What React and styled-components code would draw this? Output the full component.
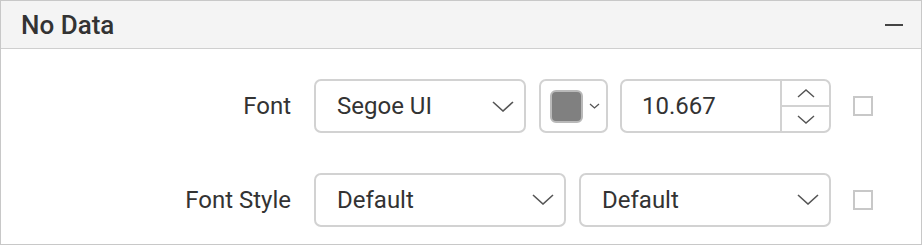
import React from 'react';
import styled, { createGlobalStyle } from 'styled-components';

const GlobalStyle = createGlobalStyle`
	html, body {
		margin: 0;
		padding: 0;
		background: #fff;
	}
	body {
		font-family: Roboto, "Liberation Sans", sans-serif;
		overflow: hidden;
	}
`

const Panel = styled.div`
	width: 922px;
	height: 245px;
	box-sizing: border-box;
	border: 1px solid #c8c8c8;
	overflow: hidden;
	background: #fff;
`

const Header = styled.div`
	height: 47px;
	border-bottom: 1px solid #cfcfcf;
	background: #f4f4f4;
	display: flex;
	align-items: center;
	justify-content: space-between;
	padding: 0 18px 0 20px;
	.title {
		font-size: 26px;
		font-weight: 500;
		color: #333;
	}
	.collapse {
		width: 18px;
		height: 2px;
		background: #444;
	}
`

const Body = styled.div`
	padding-top: 30px;
	display: flex;
	flex-direction: column;
	gap: 39px;
`

const Row = styled.div`
	display: flex;
	align-items: center;
	height: ${p => p.h || 54}px;
`

const Label = styled.div`
	width: 290px;
	text-align: right;
	font-size: 24px;
	color: #333;
	margin-right: 23px;
`

const Controls = styled.div`
	width: 517px;
	display: flex;
	justify-content: space-between;
	align-items: center;
`

const Box = styled.div`
	box-sizing: border-box;
	width: ${p => p.w}px;
	height: 54px;
	border: 2px solid #d2d2d2;
	border-radius: 7px;
	background: #fff;
	display: flex;
	align-items: center;
`

const Select = styled(Box)`
	padding: 0 10px 0 21px;
	justify-content: space-between;
	font-size: 24px;
	color: #333;
`

const ColorPick = styled(Box)`
	padding-left: 9px;
	gap: 6px;
	.swatch {
		width: 33px;
		height: 33px;
		box-sizing: border-box;
		border: 2px solid #b9b9b9;
		border-radius: 6px;
		background: #808080;
	}
`

const NumberBox = styled(Box)`
	overflow: hidden;
	.value {
		flex: 1;
		padding-left: 20px;
		font-size: 24px;
		color: #333;
	}
	.spin {
		width: 47px;
		height: 100%;
		border-left: 2px solid #d2d2d2;
		display: flex;
		flex-direction: column;
	}
	.spin > div {
		flex: 1;
		display: flex;
		align-items: center;
		justify-content: center;
	}
	.spin > div + div {
		border-top: 2px solid #d2d2d2;
	}
`

const Check = styled.div`
	width: 20px;
	height: 20px;
	box-sizing: border-box;
	border: 2px solid #c8c8c8;
	margin-left: 22px;
`

const Chevron = ({ w = 22, h = 11, up, sw = 1.6 }) => (
	<svg width={w} height={h} viewBox={`0 0 ${w} ${h}`}>
		<polyline
			points={up ? `1,${h - 1} ${w / 2},1 ${w - 1},${h - 1}` : `1,1 ${w / 2},${h - 1} ${w - 1},1`}
			fill="none"
			stroke="#555"
			strokeWidth={sw}
		/>
	</svg>
)

const App = () => {
	return (
		<Panel>
			<GlobalStyle />
			<Header>
				<span className="title">No Data</span>
				<span className="collapse" />
			</Header>
			<Body>
				<Row>
					<Label>Font</Label>
					<Controls>
						<Select w={212}>
							<span>Segoe UI</span>
							<Chevron />
						</Select>
						<ColorPick w={69}>
							<div className="swatch" />
							<Chevron w={11} h={6} sw={1.3} />
						</ColorPick>
						<NumberBox w={211}>
							<span className="value">10.667</span>
							<div className="spin">
								<div><Chevron w={18} h={9} up sw={1.4} /></div>
								<div><Chevron w={18} h={9} sw={1.4} /></div>
							</div>
						</NumberBox>
					</Controls>
					<Check />
				</Row>
				<Row h={55}>
					<Label>Font Style</Label>
					<Controls>
						<Select w={252}>
							<span>Default</span>
							<Chevron />
						</Select>
						<Select w={252}>
							<span>Default</span>
							<Chevron />
						</Select>
					</Controls>
					<Check />
				</Row>
			</Body>
		</Panel>
	);
}

export default App;
